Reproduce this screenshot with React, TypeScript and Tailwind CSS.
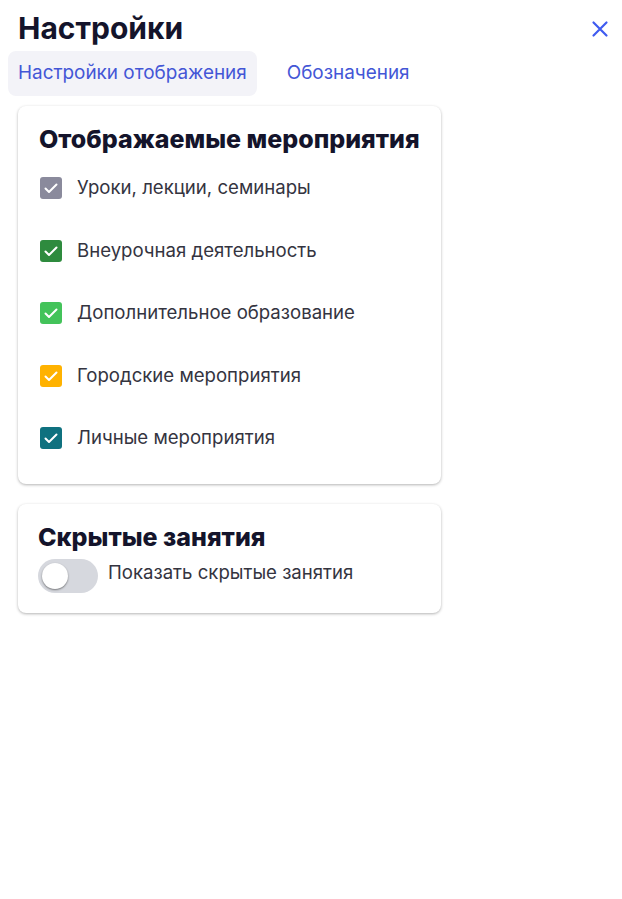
import React, { useState } from 'react';

const items = [
  { label: 'Уроки, лекции, семинары', color: 'bg-[#8a8a9c]' },
  { label: 'Внеурочная деятельность', color: 'bg-[#2e8b3e]' },
  { label: 'Дополнительное образование', color: 'bg-[#43c35a]' },
  { label: 'Городские мероприятия', color: 'bg-[#ffb200]' },
  { label: 'Личные мероприятия', color: 'bg-[#0f717f]' },
];

function Check({ color }: { color: string }) {
  return (
    <span className={`flex h-[22px] w-[22px] shrink-0 items-center justify-center rounded-[3px] ${color}`}>
      <svg width="16" height="16" viewBox="0 0 16 16" fill="none">
        <path d="M2.5 8.5l3.5 3.5 7.5-7.5" stroke="white" strokeWidth="2" strokeLinecap="round" strokeLinejoin="round" />
      </svg>
    </span>
  );
}

export default function App() {
  const [tab, setTab] = useState(0);
  const [showHidden, setShowHidden] = useState(false);

  return (
    <div className="min-h-screen w-[622px] bg-white font-['Inter',sans-serif] text-[#1a1a2e]">
      {/* Header */}
      <div className="flex items-start justify-between pl-[18px] pr-[10px] pt-[9px]">
        <h1 className="text-[30px] font-bold leading-[38px] text-[#14142b]">Настройки</h1>
        <button className="mt-[8px] p-[2px] text-[#3f5bf0]">
          <svg width="20" height="20" viewBox="0 0 20 20" fill="none">
            <path d="M3.5 3.5l13 13M16.5 3.5l-13 13" stroke="currentColor" strokeWidth="2.2" strokeLinecap="round" />
          </svg>
        </button>
      </div>

      {/* Tabs */}
      <div className="mt-[4px] flex gap-[20px] pl-[8px]">
        {['Настройки отображения', 'Обозначения'].map((t, i) => (
          <button
            key={t}
            onClick={() => setTab(i)}
            className={`h-[45px] rounded-[8px] px-[10px] text-[18.9px] text-[#4356d6] ${tab === i ? 'bg-[#f3f3f8]' : ''}`}
          >
            {t}
          </button>
        ))}
      </div>

      <div className="ml-[18px] mt-[10px] flex w-[423px] flex-col gap-[20px]">
        {/* Events card */}
        <div className="rounded-[8px] bg-white px-[21px] pb-[35px] pt-[17px] shadow-[0_1px_3px_rgba(0,0,0,0.3)]">
          <h2 className="whitespace-nowrap text-[25px] font-extrabold leading-[32px] text-[#14142b]">Отображаемые мероприятия</h2>
          <div className="mt-[22px] flex flex-col gap-[40.5px]">
            {items.map((it) => (
              <label key={it.label} className="flex h-[22px] items-center gap-[15px] pl-[1px]">
                <Check color={it.color} />
                <span className="text-[18.6px] text-[#34343f]">{it.label}</span>
              </label>
            ))}
          </div>
        </div>

        {/* Hidden card */}
        <div className="rounded-[8px] bg-white px-[20px] pb-[20px] pt-[17px] shadow-[0_1px_3px_rgba(0,0,0,0.3)]">
          <h2 className="text-[25px] font-extrabold leading-[32px] text-[#14142b]">Скрытые занятия</h2>
          <div className="mt-[6px] flex items-start gap-[10px]">
            <button
              onClick={() => setShowHidden(!showHidden)}
              className={`flex h-[34px] w-[60px] shrink-0 items-center rounded-full px-[4px] ${showHidden ? 'justify-end bg-[#4356d6]' : 'bg-[#d6d8de]'}`}
            >
              <span className="h-[26px] w-[26px] rounded-full bg-white shadow-[0_1px_2px_rgba(0,0,0,0.45)]" />
            </button>
            <span className="text-[18.6px] leading-[26px] text-[#34343f]">Показать скрытые занятия</span>
          </div>
        </div>
      </div>
    </div>
  );
}
